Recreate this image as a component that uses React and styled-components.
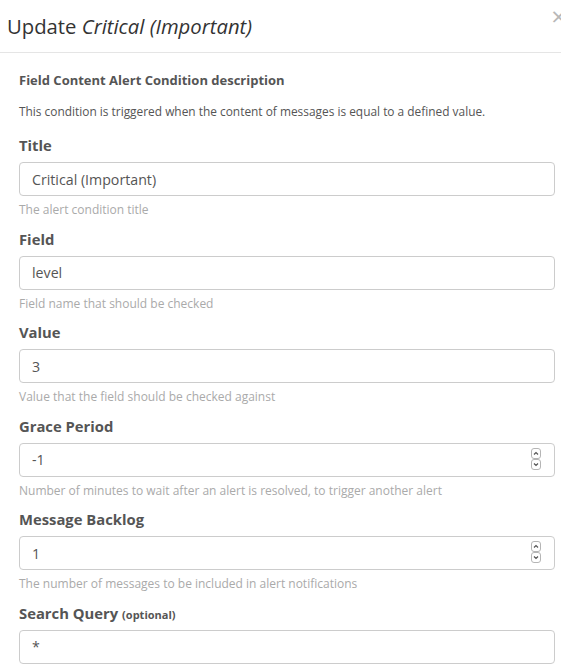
import React from "react";
import styled, { createGlobalStyle } from "styled-components";

const GlobalStyle = createGlobalStyle`
  html, body {
    margin: 0;
    padding: 0;
    background: #ffffff;
  }
  body {
    font-family: "Open Sans", "DejaVu Sans", sans-serif;
    color: #333333;
    overflow: hidden;
  }
`;

const fields = [
  { label: "Title", value: "Critical (Important)", help: "The alert condition title" },
  { label: "Field", value: "level", help: "Field name that should be checked" },
  { label: "Value", value: "3", help: "Value that the field should be checked against" },
  {
    label: "Grace Period",
    value: "-1",
    help: "Number of minutes to wait after an alert is resolved, to trigger another alert",
    number: true,
  },
  {
    label: "Message Backlog",
    value: "1",
    help: "The number of messages to be included in alert notifications",
    number: true,
  },
  { label: "Search Query", optional: true, value: "*" },
];

function Spinner() {
  return (
    <SpinBox>
      <svg width="10" height="22" viewBox="0 0 10 22">
        <rect x="0.5" y="0.5" width="9" height="10" rx="2.5" fill="#fff" stroke="#b5b5b5" />
        <path d="M3 6.5 L5 4.5 L7 6.5" fill="none" stroke="#555" strokeWidth="1.2" />
        <rect x="0.5" y="11.5" width="9" height="10" rx="2.5" fill="#fff" stroke="#b5b5b5" />
        <path d="M3 15.5 L5 17.5 L7 15.5" fill="none" stroke="#555" strokeWidth="1.2" />
      </svg>
    </SpinBox>
  );
}

function FormGroup({ label, value, help, number, optional }) {
  return (
    <Group>
      <Label>
        {label}
        {optional && <Optional>(optional)</Optional>}
      </Label>
      <InputBox>
        <Input type="text" defaultValue={value} readOnly />
        {number && <Spinner />}
      </InputBox>
      {help && <Help>{help}</Help>}
    </Group>
  );
}

export default function App() {
  return (
    <>
      <GlobalStyle />
      <Modal>
        <Header>
          <Title>
            Update <em>Critical (Important)</em>
          </Title>
          <Close>×</Close>
        </Header>
        <Body>
          <Heading>Field Content Alert Condition description</Heading>
          <Description>
            This condition is triggered when the content of messages is equal to a defined value.
          </Description>
          {fields.map((f) => (
            <FormGroup key={f.label} {...f} />
          ))}
        </Body>
      </Modal>
    </>
  );
}

const Modal = styled.div`
  width: 580px;
  background: #fff;
`;

const Header = styled.div`
  display: flex;
  align-items: center;
  justify-content: space-between;
  height: 52px;
  padding: 0 14px 0 7px;
  border-bottom: 1px solid #e5e5e5;
`;

const Title = styled.h4`
  margin: 0;
  font-size: 20.3px;
  font-weight: 400;
  color: #333;
  em {
    font-style: italic;
  }
`;

const Close = styled.span`
  font-size: 26px;
  line-height: 1;
  color: #b8b8b8;
  margin-top: -20px;
`;

const Body = styled.div`
  padding: 18px 25px 0 19px;
`;

const Heading = styled.h5`
  margin: 0 0 14px;
  font-size: 13px;
  line-height: 18px;
  font-weight: 700;
  color: #555;
`;

const Description = styled.p`
  margin: 0 0 16px;
  font-size: 11.9px;
  line-height: 16px;
  color: #555;
`;

const Group = styled.div`
  margin-bottom: 10.5px;
`;

const Label = styled.div`
  display: flex;
  align-items: baseline;
  gap: 4px;
  height: 20px;
  font-size: 14.8px;
  line-height: 20px;
  font-weight: 700;
  color: #555;
  margin-bottom: 7px;
`;

const Optional = styled.span`
  font-size: 11px;
`;

const InputBox = styled.div`
  display: flex;
  align-items: center;
  height: 34px;
  box-sizing: border-box;
  border: 1px solid #ccc;
  border-radius: 4px;
  padding: 0 13px 0 12px;
`;

const Input = styled.input`
  flex: 1;
  min-width: 0;
  border: none;
  outline: none;
  padding: 0;
  background: transparent;
  font-family: "Open Sans", "DejaVu Sans", sans-serif;
  font-size: 14.2px;
  color: #555;
`;

const SpinBox = styled.div`
  display: flex;
  margin-top: -2px;
`;

const Help = styled.div`
  margin-top: 6px;
  height: 16px;
  font-size: 12px;
  line-height: 16px;
  color: #aaa;
`;
